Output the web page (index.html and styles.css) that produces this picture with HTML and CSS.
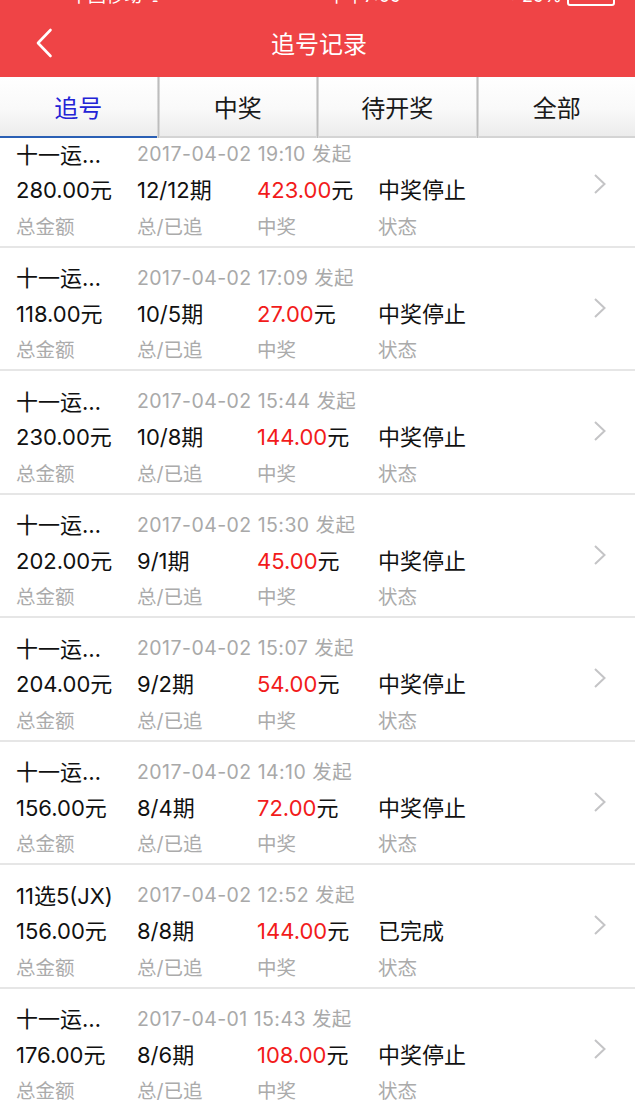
FILE: index.html
```html
<!DOCTYPE html>
<html lang="zh-CN">
<head>
<meta charset="utf-8">
<title>追号记录</title>
<link rel="stylesheet" href="styles.css">
</head>
<body>
<header class="header">
  <div class="status">
    <div class="status-inner">
      <span class="carrier">中国移动 ᯤ</span>
      <span class="time">下午7:09</span>
      <span class="batt">◔ 29% <i class="battery"></i></span>
    </div>
  </div>
  <div class="nav">
    <svg class="back" width="18" height="30" viewBox="0 0 18 30"><path d="M15.5 2 L3 15 L15.5 28" fill="none" stroke="#fff" stroke-width="2.6" stroke-linecap="round" stroke-linejoin="round"/></svg>
    <h1 class="title">追号记录</h1>
  </div>
</header>
<nav class="tabs">
  <div class="tab active">追号</div>
  <div class="sep"></div>
  <div class="tab">中奖</div>
  <div class="sep"></div>
  <div class="tab">待开奖</div>
  <div class="sep"></div>
  <div class="tab">全部</div>
</nav>
<main class="list">
  <div class="row first">
    <div class="grid">
      <span class="name">十一运夺金</span><span class="date">2017-04-02 19:10 发起</span>
      <span class="val">280.00元</span><span class="val">12/12期</span><span class="val"><em>423.00</em>元</span><span class="val">中奖停止</span>
      <span class="lab">总金额</span><span class="lab">总/已追</span><span class="lab">中奖</span><span class="lab">状态</span>
    </div>
    <svg class="chev" width="14" height="22" viewBox="0 0 14 22"><path d="M2 2 L11.5 11 L2 20" fill="none" stroke="#c4c4c6" stroke-width="2"/></svg>
  </div>
  <div class="row">
    <div class="grid">
      <span class="name">十一运夺金</span><span class="date">2017-04-02 17:09 发起</span>
      <span class="val">118.00元</span><span class="val">10/5期</span><span class="val"><em>27.00</em>元</span><span class="val">中奖停止</span>
      <span class="lab">总金额</span><span class="lab">总/已追</span><span class="lab">中奖</span><span class="lab">状态</span>
    </div>
    <svg class="chev" width="14" height="22" viewBox="0 0 14 22"><path d="M2 2 L11.5 11 L2 20" fill="none" stroke="#c4c4c6" stroke-width="2"/></svg>
  </div>
  <div class="row">
    <div class="grid">
      <span class="name">十一运夺金</span><span class="date">2017-04-02 15:44 发起</span>
      <span class="val">230.00元</span><span class="val">10/8期</span><span class="val"><em>144.00</em>元</span><span class="val">中奖停止</span>
      <span class="lab">总金额</span><span class="lab">总/已追</span><span class="lab">中奖</span><span class="lab">状态</span>
    </div>
    <svg class="chev" width="14" height="22" viewBox="0 0 14 22"><path d="M2 2 L11.5 11 L2 20" fill="none" stroke="#c4c4c6" stroke-width="2"/></svg>
  </div>
  <div class="row">
    <div class="grid">
      <span class="name">十一运夺金</span><span class="date">2017-04-02 15:30 发起</span>
      <span class="val">202.00元</span><span class="val">9/1期</span><span class="val"><em>45.00</em>元</span><span class="val">中奖停止</span>
      <span class="lab">总金额</span><span class="lab">总/已追</span><span class="lab">中奖</span><span class="lab">状态</span>
    </div>
    <svg class="chev" width="14" height="22" viewBox="0 0 14 22"><path d="M2 2 L11.5 11 L2 20" fill="none" stroke="#c4c4c6" stroke-width="2"/></svg>
  </div>
  <div class="row">
    <div class="grid">
      <span class="name">十一运夺金</span><span class="date">2017-04-02 15:07 发起</span>
      <span class="val">204.00元</span><span class="val">9/2期</span><span class="val"><em>54.00</em>元</span><span class="val">中奖停止</span>
      <span class="lab">总金额</span><span class="lab">总/已追</span><span class="lab">中奖</span><span class="lab">状态</span>
    </div>
    <svg class="chev" width="14" height="22" viewBox="0 0 14 22"><path d="M2 2 L11.5 11 L2 20" fill="none" stroke="#c4c4c6" stroke-width="2"/></svg>
  </div>
  <div class="row">
    <div class="grid">
      <span class="name">十一运夺金</span><span class="date">2017-04-02 14:10 发起</span>
      <span class="val">156.00元</span><span class="val">8/4期</span><span class="val"><em>72.00</em>元</span><span class="val">中奖停止</span>
      <span class="lab">总金额</span><span class="lab">总/已追</span><span class="lab">中奖</span><span class="lab">状态</span>
    </div>
    <svg class="chev" width="14" height="22" viewBox="0 0 14 22"><path d="M2 2 L11.5 11 L2 20" fill="none" stroke="#c4c4c6" stroke-width="2"/></svg>
  </div>
  <div class="row">
    <div class="grid">
      <span class="name">11选5(JX)</span><span class="date">2017-04-02 12:52 发起</span>
      <span class="val">156.00元</span><span class="val">8/8期</span><span class="val"><em>144.00</em>元</span><span class="val">已完成</span>
      <span class="lab">总金额</span><span class="lab">总/已追</span><span class="lab">中奖</span><span class="lab">状态</span>
    </div>
    <svg class="chev" width="14" height="22" viewBox="0 0 14 22"><path d="M2 2 L11.5 11 L2 20" fill="none" stroke="#c4c4c6" stroke-width="2"/></svg>
  </div>
  <div class="row">
    <div class="grid">
      <span class="name">十一运夺金</span><span class="date">2017-04-01 15:43 发起</span>
      <span class="val">176.00元</span><span class="val">8/6期</span><span class="val"><em>108.00</em>元</span><span class="val">中奖停止</span>
      <span class="lab">总金额</span><span class="lab">总/已追</span><span class="lab">中奖</span><span class="lab">状态</span>
    </div>
    <svg class="chev" width="14" height="22" viewBox="0 0 14 22"><path d="M2 2 L11.5 11 L2 20" fill="none" stroke="#c4c4c6" stroke-width="2"/></svg>
  </div>
</main>
</body>
</html>
```
FILE: styles.css
```css
* { box-sizing: border-box; margin: 0; padding: 0; }
html, body { height: 1110px; overflow: hidden; }
body {
  background: #fff;
  font-family: Inter, "Noto Sans CJK SC", sans-serif;
  color: #111;
}
.header {
  background: #ef4446;
  height: 77px;
  display: flex;
  flex-direction: column;
}
.status {
  height: 6px;
  overflow: hidden;
  color: #fff;
}
.status-inner {
  margin-top: -15px;
  height: 22px;
  line-height: 22px;
  font-size: 18px;
  display: flex;
  justify-content: space-between;
  align-items: center;
  padding: 0 20px 0 70px;
}
.time { margin-left: 60px; }
.battery {
  display: inline-block;
  width: 48px;
  height: 18px;
  border: 2px solid #fff;
  border-radius: 3px;
  vertical-align: middle;
}
.nav {
  flex: 1;
  display: flex;
  align-items: center;
  justify-content: center;
  padding-left: 35px;
  padding-right: 34px;
  padding-top: 2px;
}
.back { flex: none; margin-right: auto; }
.title {
  font-weight: normal;
  font-size: 24px;
  color: #fff;
  margin-right: auto;
  transform: translateX(-8px);
}
.tabs {
  display: flex;
  height: 61px;
  background: #fff;
}
.tab {
  flex: 1;
  display: flex;
  align-items: center;
  justify-content: center;
  font-size: 24px;
  color: #1a1a1a;
  background: linear-gradient(#ffffff 0%, #f9f9f9 55%, #ececec 100%);
  border-bottom: 2px solid #d4d4d4;
}
.tab.active {
  color: #2323d6;
  border-bottom-color: #2a5fb4;
}
.sep {
  width: 3px;
  background: linear-gradient(90deg, #e6e6e6, #bdbdbd 50%, #e6e6e6);
}
.list {
  overflow: hidden;
}
.row {
  height: 123.5px;
  border-bottom: 2px solid #e6e6e6;
  display: flex;
  align-items: flex-start;
  padding: 11px 28px 0 16px;
}
.row.first { margin-top: -14px; }
.grid {
  flex: 1;
  display: grid;
  grid-template-columns: 121px 120px 121px 1fr;
  grid-template-rows: 35.5px 35.5px 36px;
  align-items: center;
}
.name {
  font-size: 22px;
  color: #111;
  white-space: nowrap;
  overflow: hidden;
  text-overflow: ellipsis;
  width: 104px;
}
.date {
  grid-column: 2 / 5;
  font-size: 19.5px;
  color: #a9a9a9;
  letter-spacing: 0.45px;
}
.val {
  font-size: 22px;
  color: #111;
  white-space: nowrap;
}
.val em {
  font-style: normal;
  color: #f21b1b;
}
.lab {
  font-size: 19.5px;
  color: #ababab;
  padding-top: 2px;
}
.chev { flex: none; align-self: center; margin-top: -12px; }
```
